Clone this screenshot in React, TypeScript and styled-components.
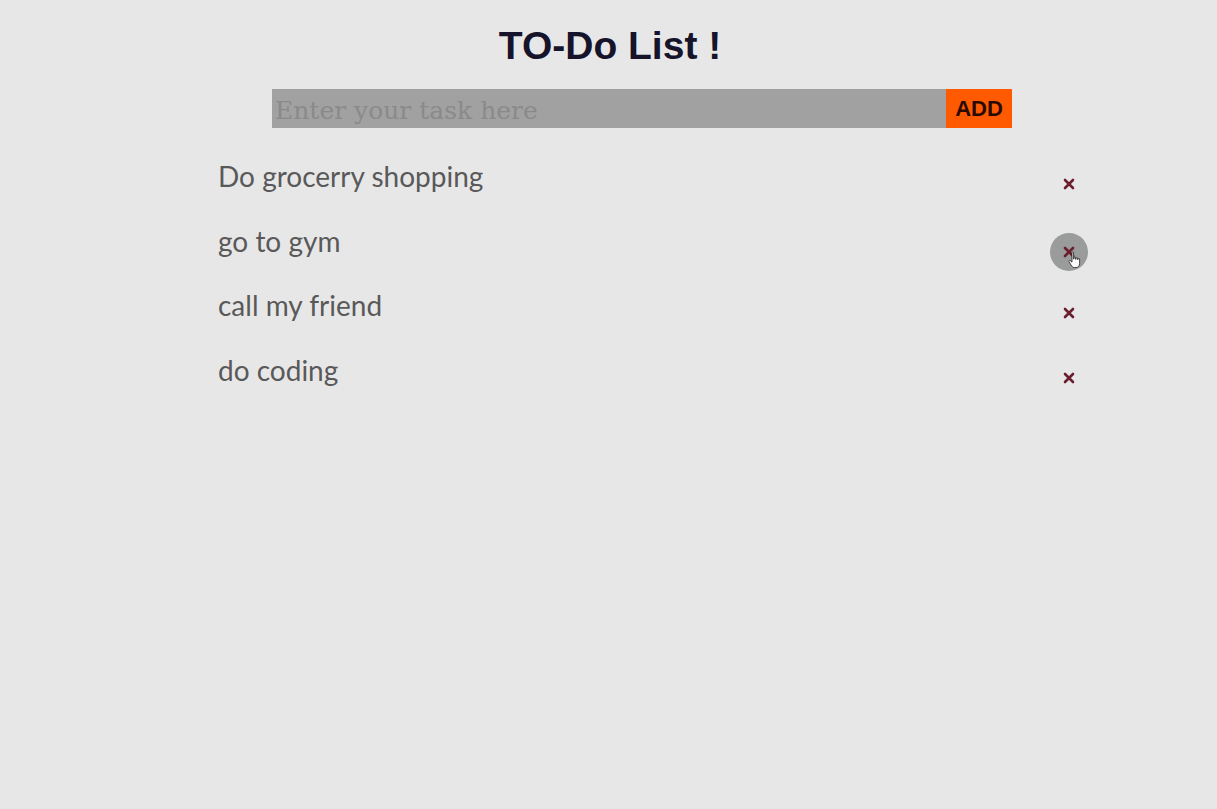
import React from "react";
import styled, { createGlobalStyle } from "styled-components";

const Global = createGlobalStyle`
  html, body { margin: 0; padding: 0; background: #e8e7e8; }
  body { font-family: "Liberation Sans", Arial, sans-serif; }
`;

const Page = styled.div`
  width: 1217px;
  height: 809px;
  background: #e8e7e8;
  display: flex;
  flex-direction: column;
  overflow: hidden;
`;

const Title = styled.h1`
  margin: 24px 0 0 0;
  font-family: "Liberation Sans", Arial, sans-serif;
  font-weight: 700;
  font-size: 39px;
  line-height: 44px;
  color: #16142a;
  text-align: center;
  padding-left: 3px;
`;

const Form = styled.div`
  display: flex;
  margin: 21px 0 0 272px;
  width: 740px;
  height: 39px;
`;

const Input = styled.input`
  flex: 1;
  border: none;
  outline: none;
  background: #a1a1a1;
  padding: 4px 0 0 3px;
  font-family: "DejaVu Serif", "Liberation Serif", serif;
  font-size: 25px;
  color: #333;
  &::placeholder { color: #8a8a8a; }
`;

const AddButton = styled.button`
  width: 66px;
  border: none;
  background: #ff5a00;
  color: #2a0a00;
  font-family: "Liberation Sans", Arial, sans-serif;
  font-weight: 700;
  font-size: 22px;
  padding: 0;
  cursor: pointer;
`;

const List = styled.ul`
  list-style: none;
  margin: 30px 0 0 218px;
  padding: 0;
  width: 869px;
`;

const Item = styled.li`
  display: flex;
  justify-content: space-between;
  align-items: flex-start;
  height: 64.7px;
`;

const ItemText = styled.span`
  font-family: Lato, "Open Sans", sans-serif;
  font-size: 28px;
  line-height: 36px;
  color: #595959;
`;

const Remove = styled.button<{ $hover?: boolean }>`
  width: 38px;
  height: 38px;
  margin-top: ${(p) => (p.$hover ? "3px" : "0px")};
  border-radius: 50%;
  border: none;
  background: ${(p) => (p.$hover ? "#9a9c9b" : "transparent")};
  display: flex;
  align-items: center;
  justify-content: center;
  padding: 0;
  cursor: pointer;
  position: relative;
  top: 7px;
  left: 1px;
`;

const Cursor = styled.svg`
  position: absolute;
  left: 18px;
  top: 18px;
`;

const XIcon = () => (
  <svg width="12" height="12" viewBox="0 0 12 12">
    <path d="M2 2 L10 10 M10 2 L2 10" stroke="#6b1f2e" strokeWidth="2.6" strokeLinecap="round" />
  </svg>
);

const items = ["Do grocerry shopping", "go to gym", "call my friend", "do coding"];

export default function App() {
  return (
    <Page>
      <Global />
      <Title>TO-Do List !</Title>
      <Form>
        <Input placeholder="Enter your task here" />
        <AddButton>ADD</AddButton>
      </Form>
      <List>
        {items.map((t, i) => (
          <Item key={t}>
            <ItemText>{t}</ItemText>
            <Remove $hover={i === 1}>
              <XIcon />
              {i === 1 && (
                <Cursor width="14" height="18" viewBox="0 0 14 18">
                  <path
                    d="M4 1.5 C4 0.7 5.6 0.7 5.6 1.5 L5.6 8 L6 8 L6 6.5 C6 5.8 7.6 5.8 7.6 6.5 L7.6 8.3 L8 8.3 L8 7.2 C8 6.5 9.6 6.5 9.6 7.2 L9.6 8.6 L10 8.6 L10 8 C10 7.3 11.6 7.3 11.6 8 L11.6 12.5 C11.6 15 10 16.5 8 16.5 L6.5 16.5 C5 16.5 4 15.5 3 14 L1 10.5 C0.6 9.8 1.6 9 2.3 9.6 L4 11.2 Z"
                    fill="#fff"
                    stroke="#222"
                    strokeWidth="0.8"
                  />
                </Cursor>
              )}
            </Remove>
          </Item>
        ))}
      </List>
    </Page>
  );
}
